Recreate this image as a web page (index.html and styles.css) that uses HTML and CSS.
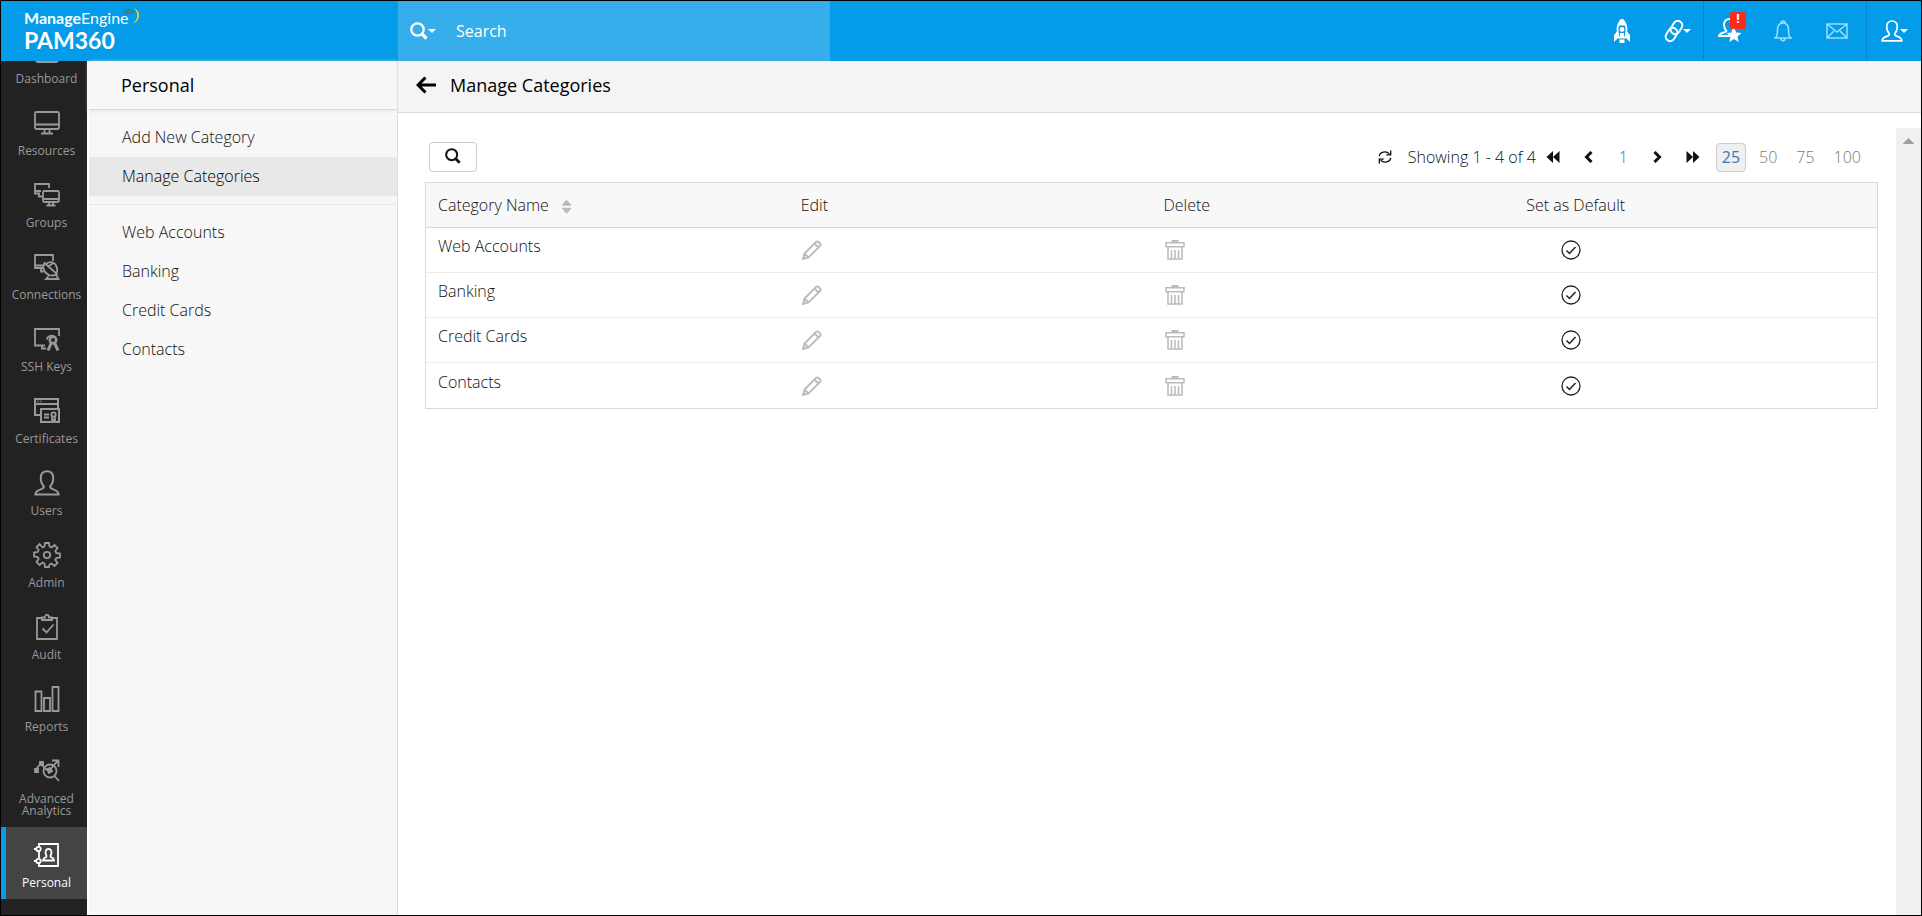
FILE: index.html
```
<!DOCTYPE html>
<html lang="en">
<head>
	<meta charset="utf-8">
	<title>PAM360 - Manage Categories</title>
	<link rel="stylesheet" href="styles.css">
</head>
<body>

<!-- shared icons -->
<svg class="sprite" aria-hidden="true">
	<symbol id="magnifier" viewBox="0 0 18 18"><circle cx="7.500" cy="7.500" r="6.200" fill="none" stroke="currentColor" stroke-width="2.300"/><path d="M11.500 11.500l5 5" stroke="currentColor" stroke-width="3.200"/></symbol>
	<symbol id="user" viewBox="0 0 26 26"><path d="M13 1.200c-4 0-6.200 2.800-6.200 6.800 0 3.500 1.200 6.500 3 8.200.3 1.800-.8 2.500-3 3.200-3 .9-5 1.800-5.600 5.200h23.600c-.6-3.400-2.600-4.300-5.600-5.200-2.200-.7-3.300-1.400-3-3.200 1.800-1.700 3-4.700 3-8.200 0-4-2.200-6.800-6.200-6.800z" fill="none" stroke="currentColor" stroke-width="2" stroke-linejoin="round"/></symbol>
	<symbol id="pencil" viewBox="0 0 20 20"><path d="M1 19l1.500-5.500L14 2c1-1 1.500-1 2.500 0l1.500 1.500c1 1 1 1.500 0 2.500L6.500 17.500 1 19zM12.500 3.500l4 4M2.500 13.500l4 4" fill="none" stroke="currentColor" stroke-width="1.800"/><path d="M1 19l1-3 2 2z" fill="currentColor"/></symbol>
	<symbol id="trash" viewBox="0 0 20 20"><path d="M6.500 0h7v2h-7z" fill="currentColor"/><path d="M1 2.700h18v4H1zM3 7v12h14V7M6.500 10v9M10 10v9M13.500 10v9" fill="none" stroke="currentColor" stroke-width="1.500"/></symbol>
	<symbol id="check" viewBox="0 0 20 20"><circle cx="10" cy="10" r="9" fill="none" stroke="currentColor" stroke-width="1.300"/><path d="M5.500 10.500l3 3 6-6.500" fill="none" stroke="currentColor" stroke-width="1.500"/></symbol>
	<symbol id="prev" viewBox="0 0 12 12"><path d="M9.500 1L4.500 6l5 5" fill="none" stroke="currentColor" stroke-width="3"/></symbol>
	<symbol id="next" viewBox="0 0 12 12"><path d="M2.500 1l5 5-5 5" fill="none" stroke="currentColor" stroke-width="3"/></symbol>
	<symbol id="first" viewBox="0 0 14 12"><path d="M7 0v12L0.500 6zM13.500 0v12L7 6z" fill="currentColor"/></symbol>
	<symbol id="last" viewBox="0 0 14 12"><path d="M7 0v12l6.500-6zM.5 0v12L7 6z" fill="currentColor"/></symbol>
</svg>

<div class="app">

<header class="topbar">
	<a class="logo" href="#">
		<span class="logo-brand"><b>Manage</b>Engine</span>
		<span class="logo-name">PAM360</span>
		<svg class="logo-arc" viewBox="0 0 20 18"><path d="M2 6C6 0 13 0 16 8 12 3 8 3 2 6z" fill="#12957f"/><path d="M1 8c4-4 8-4 12-1-4-1-8-1-12 1z" fill="#8a5588"/><path d="M13 1c7 3 7 12-1 16 5-5 6-10 1-16z" fill="#e3d42e"/></svg>
	</a>
	<div class="search">
		<button class="search-type" aria-label="Search type"><svg class="icon-search"><use href="#magnifier"/></svg><span class="caret"></span></button>
		<input class="search-input" type="text" placeholder="Search" aria-label="Search">
	</div>
	<div class="tools">
		<button class="tool" aria-label="Quick start"><svg class="icon-tool" viewBox="0 0 24 24"><path d="M12 0c-3 3-4.500 6.500-4.500 10.500 0 3 .5 5.500 1.200 8h6.600c.7-2.500 1.200-5 1.200-8C16.500 6.500 15 3 12 0z" fill="none" stroke="currentColor" stroke-width="1.800"/><path d="M12 0c-2 2-3.200 4-3.800 6.500h7.600C15.200 4 14 2 12 0z" fill="currentColor"/><circle cx="12" cy="10.500" r="2.400" fill="currentColor"/><path d="M7.500 12L4 16v7l4-4zM16.500 12l3.500 4v7l-4-4zM10 14h4v5h-4zM9.500 20.500h5V24h-5z" fill="currentColor"/></svg></button>
		<button class="tool" aria-label="Links"><svg class="icon-tool" viewBox="0 0 24 24"><g fill="none" stroke="currentColor" stroke-width="2"><rect x="10" y="1.500" width="9" height="14" rx="4.500" transform="rotate(32 14.500 8.500)"/><rect x="5" y="8.500" width="9" height="14" rx="4.500" transform="rotate(32 9.500 15.500)"/></g></svg><span class="caret caret-near"></span></button>
		<span class="divider"></span>
		<button class="tool tool-requests" aria-label="Access requests"><svg class="icon-requests" viewBox="0 0 26 26"><path d="M15 15c-2-1.300 2-4 2-8.500C17 3 14.500 1 11.500 1S6 3 6 6.500c0 3 1 5 2.500 6.500.3 2-7 .8-7.500 5h11" fill="none" stroke="currentColor" stroke-width="2"/><path d="M16 9.500l2.200 5 5.300.4-4 3.500 1.200 5.600-4.700-3-4.700 3 1.200-5.600-4-3.500 5.300-.4z" fill="currentColor"/></svg><span class="alert">!</span></button>
		<button class="tool tool-faded" aria-label="Notifications"><svg class="icon-bell" viewBox="0 0 20 22"><path d="M8 3c0-2.500 4-2.500 4 0M1 18h18M2.500 18c2-2 2-4 2-8C4.500 5 7 3 10 3s5.500 2 5.500 7c0 4 0 6 2 8M8 18.500c0 3 4 3 4 0" fill="none" stroke="currentColor" stroke-width="1.600"/></svg></button>
		<button class="tool tool-faded" aria-label="Mail"><svg class="icon-mail" viewBox="0 0 22 16"><path d="M1 1h20v14H1zM1 1l10 8 10-8M1 15l7-7M21 15l-7-7" fill="none" stroke="currentColor" stroke-width="1.500"/></svg></button>
		<span class="divider"></span>
		<button class="tool tool-account" aria-label="My account"><svg class="icon-account"><use href="#user"/></svg><span class="caret caret-near"></span></button>
	</div>
</header>

<div class="body">

<nav class="sidebar">
	<a class="side-item" href="#"><svg class="side-icon" viewBox="0 0 28 26"><rect x="3" y="3" width="22" height="21" rx="2"/></svg><span>Dashboard</span></a>
	<a class="side-item" href="#"><svg class="side-icon" viewBox="0 0 28 26"><rect x="2" y="2" width="24" height="17" rx="1.500"/><path d="M2 14.500h24M11.500 19v4M16.500 19v4M8 23.500h12"/></svg><span>Resources</span></a>
	<a class="side-item" href="#"><svg class="side-icon" viewBox="0 0 28 26"><path d="M7 11.500H2V2h14v4M2 9h6M6 12v2.500h3"/><rect x="10" y="9" width="16" height="11" rx="1.500"/><path d="M10 17h16M16 20v3M20 20v3M13.500 23.500h9"/></svg><span>Groups</span></a>
	<a class="side-item" href="#"><svg class="side-icon" viewBox="0 0 28 26"><path d="M10 14H2V1h18v6M2 11.500h8M8 14v3.500h3"/><path d="M11.500 9c-3 5 0 10 4.500 12 4 1 7 0 8-1zM13 10.500c2-3.500 8-3 10 1s1.500 7-.5 8M15 13l5-4M16 21.500L13 25h12.500l-3-5"/></svg><span>Connections</span></a>
	<a class="side-item" href="#"><svg class="side-icon" viewBox="0 0 28 26"><path d="M12 19.500H2V3h24v7M9 20v2.500h4"/><circle cx="20" cy="14" r="3.200" stroke-width="2.600"/><path d="M14 13.500c0-4 6-5 8-2.500"/><path d="M18.500 16.500L15 24.500M21.500 17l3.500 7.500" stroke-width="3"/></svg><span>SSH Keys</span></a>
	<a class="side-item" href="#"><svg class="side-icon" viewBox="0 0 28 26"><path d="M8 17H2V1h23v9M2 6h23M4.500 3.500h1M7.500 3.500h1" stroke-width="2"/><rect x="8" y="11" width="18" height="13" stroke-width="2"/><path d="M11 16.500h5M11 19.500h5M19 19v3.500l1.500-1 1.500 1V19"/><circle cx="20.500" cy="16.500" r="2.200"/></svg><span>Certificates</span></a>
	<a class="side-item" href="#"><svg class="side-icon" viewBox="0 0 26 26"><use href="#user"/></svg><span>Users</span></a>
	<a class="side-item" href="#"><svg class="side-icon" viewBox="0 0 28 26"><path d="M12 1h4l.5 3.500 2 1L21.500 3l3 3-2.200 3 1 2 3.700.500v4l-3.700.500-1 2 2.200 3-3 3-3-2.500-2 1L16 25h-4l-.5-3.500-2-1L6.500 23l-3-3 2.200-3-1-2L1 14.500v-4l3.700-.5 1-2-2.200-3 3-3 3 3.500 2-1z"/><circle cx="14" cy="13" r="3.200"/></svg><span>Admin</span></a>
	<a class="side-item" href="#"><svg class="side-icon" viewBox="0 0 28 26"><path d="M9 4H4v21h20V4h-5M9 5.500V3.500h3c0-3.500 4-3.500 4 0h3v2.500H9zM9.500 14.500l4 4 7-8"/></svg><span>Audit</span></a>
	<a class="side-item" href="#"><svg class="side-icon" viewBox="0 0 28 26"><path d="M2.500 5.500h6V25h-6zM11 12h6v13h-6zM19.500 1h6v24h-6z"/></svg><span>Reports</span></a>
	<a class="side-item" href="#"><svg class="side-icon" viewBox="0 0 28 26"><circle cx="17" cy="13" r="6.500"/><path d="M21.500 18l4.500 5M2.500 12L8 5l4 6 4.500 1.500L25 2.500M19 2.500h6.500V9"/><path d="M2 11h3v3H2zM7 4h3v3H7zM14 11l3-1 2 3-3 2z" fill="currentColor"/></svg><span>Advanced Analytics</span></a>
	<a class="side-item active" href="#"><svg class="side-icon" viewBox="0 0 28 26"><path d="M6 4V2h19v22H6v-2M6 10v6"/><circle cx="5.500" cy="7" r="2.200"/><circle cx="5.500" cy="19" r="2.200"/><path d="M3 7H1M3 19H1"/><path d="M15.500 7c-3 0-3.500 3-2.500 5.500 1 2 .5 3-1 3.200-1.300.3-1.800 1-2 2.800h11c-.2-1.800-.7-2.500-2-2.800-1.500-.2-2-1.200-1-3.200 1-2.500.5-5.500-2.500-5.500z"/></svg><span>Personal</span></a>
</nav>

<aside class="panel">
	<h2 class="panel-title">Personal</h2>
	<ul class="panel-list">
		<li><a href="#">Add New Category</a></li>
		<li><a class="current" href="#">Manage Categories</a></li>
	</ul>
	<ul class="panel-list">
		<li><a href="#">Web Accounts</a></li>
		<li><a href="#">Banking</a></li>
		<li><a href="#">Credit Cards</a></li>
		<li><a href="#">Contacts</a></li>
	</ul>
</aside>

<main class="main">
	<div class="page-head">
		<a class="back" href="#" aria-label="Back"><svg class="icon-back" viewBox="0 0 20 18"><path d="M20 9H2.500M9.500 1.500L2 9l7.500 7.500" fill="none" stroke="currentColor" stroke-width="3"/></svg></a>
		<h1 class="page-title">Manage Categories</h1>
	</div>
	<div class="scroller">
		<div class="content">
			<div class="toolbar">
				<button class="filter" aria-label="Search table"><svg class="icon-filter"><use href="#magnifier"/></svg></button>
				<div class="pager">
					<button class="page-btn" aria-label="Refresh"><svg class="icon-refresh" viewBox="0 0 16 16"><path d="M1.500 7c.5-5 8-6.500 11.500-2.500M14.500 9c-.5 5-8 6.500-11.500 2.500M14.500.5v5h-5M1.500 15.500v-5h5" fill="none" stroke="currentColor" stroke-width="1.500"/></svg></button>
					<span class="showing">Showing 1 - 4 of 4</span>
					<div class="pages">
						<button class="page-btn" aria-label="First page"><svg class="icon-double"><use href="#first"/></svg></button>
						<button class="page-btn" aria-label="Previous page"><svg class="icon-single"><use href="#prev"/></svg></button>
						<a class="page-number" href="#">1</a>
						<button class="page-btn" aria-label="Next page"><svg class="icon-single"><use href="#next"/></svg></button>
						<button class="page-btn" aria-label="Last page"><svg class="icon-double"><use href="#last"/></svg></button>
					</div>
					<div class="sizes">
						<a class="size selected" href="#">25</a>
						<a class="size" href="#">50</a>
						<a class="size" href="#">75</a>
						<a class="size" href="#">100</a>
					</div>
				</div>
			</div>
			<table class="grid">
				<thead>
					<tr>
						<th>Category Name <span class="sort"></span></th>
						<th>Edit</th>
						<th>Delete</th>
						<th>Set as Default</th>
					</tr>
				</thead>
				<tbody>
					<tr>
						<td>Web Accounts</td>
						<td><button class="row-btn" aria-label="Edit Web Accounts"><svg><use href="#pencil"/></svg></button></td>
						<td><button class="row-btn" aria-label="Delete Web Accounts"><svg><use href="#trash"/></svg></button></td>
						<td><button class="row-btn default-btn" aria-label="Set Web Accounts as default"><svg><use href="#check"/></svg></button></td>
					</tr>
					<tr>
						<td>Banking</td>
						<td><button class="row-btn" aria-label="Edit Banking"><svg><use href="#pencil"/></svg></button></td>
						<td><button class="row-btn" aria-label="Delete Banking"><svg><use href="#trash"/></svg></button></td>
						<td><button class="row-btn default-btn" aria-label="Set Banking as default"><svg><use href="#check"/></svg></button></td>
					</tr>
					<tr>
						<td>Credit Cards</td>
						<td><button class="row-btn" aria-label="Edit Credit Cards"><svg><use href="#pencil"/></svg></button></td>
						<td><button class="row-btn" aria-label="Delete Credit Cards"><svg><use href="#trash"/></svg></button></td>
						<td><button class="row-btn default-btn" aria-label="Set Credit Cards as default"><svg><use href="#check"/></svg></button></td>
					</tr>
					<tr>
						<td>Contacts</td>
						<td><button class="row-btn" aria-label="Edit Contacts"><svg><use href="#pencil"/></svg></button></td>
						<td><button class="row-btn" aria-label="Delete Contacts"><svg><use href="#trash"/></svg></button></td>
						<td><button class="row-btn default-btn" aria-label="Set Contacts as default"><svg><use href="#check"/></svg></button></td>
					</tr>
				</tbody>
			</table>
		</div>
		<div class="scrollbar"><span class="scroll-up"></span></div>
	</div>
</main>

</div>
</div>

</body>
</html>
```
FILE: styles.css
```
* {
	box-sizing: border-box;
}

body {
	margin: 0;
	font-family: "Open Sans", "Noto Sans", sans-serif;
	font-size: 16px;
	font-weight: 300;
	color: #111;
	background: #fff;
}

a {
	color: inherit;
	text-decoration: none;
}

button {
	padding: 0;
	border: 0;
	background: none;
	color: inherit;
	font: inherit;
	cursor: pointer;
}

svg {
	display: block;
}

.sprite {
	display: none;
}

.app {
	height: 100vh;
	display: flex;
	flex-direction: column;
	border: 1px solid #000;
}

/* top bar */
.topbar {
	flex: none;
	height: 60px;
	display: flex;
	background: #049be8;
	color: #fff;
}

.logo {
	position: relative;
	width: 397px;
	padding: 8px 23px;
	display: flex;
	flex-direction: column;
	font-family: Lato, sans-serif;
}

.logo-brand {
	font-size: 16px;
	line-height: 18px;
	font-weight: 400;
}

.logo-name {
	font-size: 23px;
	line-height: 26px;
	font-weight: 700;
}

.logo-arc {
	position: absolute;
	left: 120px;
	top: 6px;
	width: 20px;
	height: 18px;
}

.search {
	width: 432px;
	display: flex;
	align-items: center;
	background: #36aeeb;
}

.search-type {
	display: flex;
	align-items: center;
	padding-left: 12px;
}

.icon-search {
	width: 18px;
	height: 18px;
}

.caret {
	border: 4px solid transparent;
	border-top-color: #fff;
	border-bottom: 0;
}

.caret-near {
	margin-left: -3px;
}

.search-input {
	flex: 1;
	min-width: 0;
	margin-left: 18px;
	border: 0;
	outline: 0;
	background: none;
	color: #fff;
	font: inherit;
	font-weight: 400;
}

.search-input::placeholder {
	color: #fff;
	opacity: 1;
}

.tools {
	margin-left: auto;
	display: flex;
}

.tool {
	width: 54px;
	display: flex;
	align-items: center;
	justify-content: center;
}

.divider {
	width: 1px;
	background: #0586cb;
}

.icon-tool {
	width: 24px;
	height: 24px;
}

.tool-requests {
	position: relative;
}

.icon-requests {
	width: 26px;
	height: 26px;
}

.alert {
	position: absolute;
	left: 26px;
	top: 11px;
	width: 16px;
	height: 17px;
	border-radius: 2px;
	background: #f92c1c;
	font-size: 12px;
	line-height: 14px;
	font-weight: 700;
}

.tool-faded {
	padding-right: 5px;
	color: #9addff;
}

.icon-bell {
	width: 20px;
	height: 22px;
}

.icon-mail {
	width: 22px;
	height: 16px;
}

.icon-account {
	width: 22px;
	height: 22px;
}

/* left navigation */
.body {
	flex: 1;
	min-height: 0;
	display: flex;
}

.sidebar {
	flex: none;
	width: 86px;
	padding-bottom: 16px;
	display: flex;
	flex-direction: column;
	justify-content: flex-end;
	overflow: hidden;
	background: #222;
	color: #999;
}

.side-item {
	flex: none;
	display: flex;
	flex-direction: column;
	align-items: center;
	gap: 9px;
	padding: 15px 0 10px;
	border-left: 5px solid transparent;
	font-size: 12px;
	line-height: 12px;
	font-weight: 400;
	text-align: center;
}

.side-icon {
	width: 28px;
	height: 26px;
	fill: none;
	stroke: currentColor;
	stroke-width: 1.8;
}

.side-item.active {
	border-color: #049be8;
	background: #444;
	color: #fff;
}

/* section panel */
.panel {
	flex: none;
	width: 311px;
	border-left: 2px solid #fff;
	border-right: 1px solid #ddd;
	background: #f7f7f7;
}

.panel-title {
	margin: 0;
	padding: 12px 32px;
	border-bottom: 1px solid #d9d9d9;
	box-shadow: 0 1px 4px #e6e6e6;
	color: #000;
	font-size: 18px;
	line-height: 24px;
	font-weight: 400;
}

.panel-list {
	margin: 0;
	padding: 8px 0;
	list-style: none;
}

.panel-list + .panel-list {
	border-top: 1px solid #e8e8e8;
}

.panel-list a {
	display: block;
	padding: 7px 33px 8px;
	line-height: 24px;
}

.panel-list .current {
	background: #e8e8e8;
	color: #000;
}

/* page */
.main {
	flex: 1;
	min-width: 0;
	display: flex;
	flex-direction: column;
}

.page-head {
	display: flex;
	align-items: center;
	gap: 14px;
	height: 52px;
	padding: 0 18px 4px;
	border-bottom: 1px solid #d9d9d9;
	background: #f4f4f4;
	color: #000;
}

.icon-back {
	width: 20px;
	height: 18px;
}

.page-title {
	margin: 0;
	font-size: 18px;
	line-height: 24px;
	font-weight: 400;
}

.scroller {
	flex: 1;
	min-height: 0;
	display: flex;
	padding-top: 15px;
}

.content {
	flex: 1;
	min-width: 0;
	padding: 14px 18px 0 27px;
}

.scrollbar {
	width: 25px;
	padding-top: 10px;
	display: flex;
	justify-content: center;
	background: #f0f0f0;
}

.scroll-up {
	width: 12px;
	height: 6px;
	background: #a0a0a0;
	clip-path: polygon(50% 0, 100% 100%, 0 100%);
}

.toolbar {
	display: flex;
	justify-content: space-between;
	align-items: center;
	padding: 0 11px 10px 4px;
}

.filter {
	width: 48px;
	height: 30px;
	padding-bottom: 3px;
	display: flex;
	align-items: center;
	justify-content: center;
	border: 1px solid #ccc;
	border-radius: 4px;
}

.icon-filter {
	width: 16px;
	height: 16px;
}

.pager {
	display: flex;
	align-items: center;
}

.icon-refresh {
	width: 14px;
	height: 16px;
}

.showing {
	margin-left: 16px;
}

.pages {
	display: flex;
	align-items: center;
}

.pages > * {
	width: 35px;
	display: flex;
	justify-content: center;
}

.icon-double {
	width: 14px;
	height: 12px;
}

.icon-single {
	width: 12px;
	height: 12px;
}

.page-number {
	color: #337ab7;
}

.sizes {
	display: flex;
	gap: 7px;
	margin-left: 5px;
	color: #777;
}

.size {
	padding: 0 5px;
	border: 1px solid transparent;
	border-radius: 4px;
	line-height: 27px;
}

.size.selected {
	border-color: #ccc;
	background: #f0f0f0;
	color: #337ab7;
	font-weight: 400;
}

/* category table */
.grid {
	width: 100%;
	table-layout: fixed;
	border: 1px solid #d9d9d9;
	border-spacing: 0;
}

.grid th,
.grid td {
	height: 45px;
	padding: 0 12px;
	border-bottom: 1px solid #ebebeb;
	text-align: left;
	font-weight: 300;
}

.grid th {
	border-color: #d9d9d9;
	background: #f8f8f8;
}

.grid td:first-child {
	padding-bottom: 8px;
}

.grid tr:last-child td {
	border-bottom: 0;
}

.sort {
	display: inline-block;
	width: 9px;
	height: 14px;
	margin-left: 9px;
	vertical-align: middle;
	background: #bbb;
	clip-path: polygon(50% 0, 100% 36%, 100% 43%, 0 43%, 0 57%, 100% 57%, 100% 64%, 50% 100%, 0 64%, 0 36%, 50% 0);
}

.row-btn {
	display: block;
	margin-left: 1px;
	color: #bbb;
}

.row-btn svg {
	width: 20px;
	height: 20px;
}

.default-btn {
	margin-left: 35px;
	color: #222;
}
```
